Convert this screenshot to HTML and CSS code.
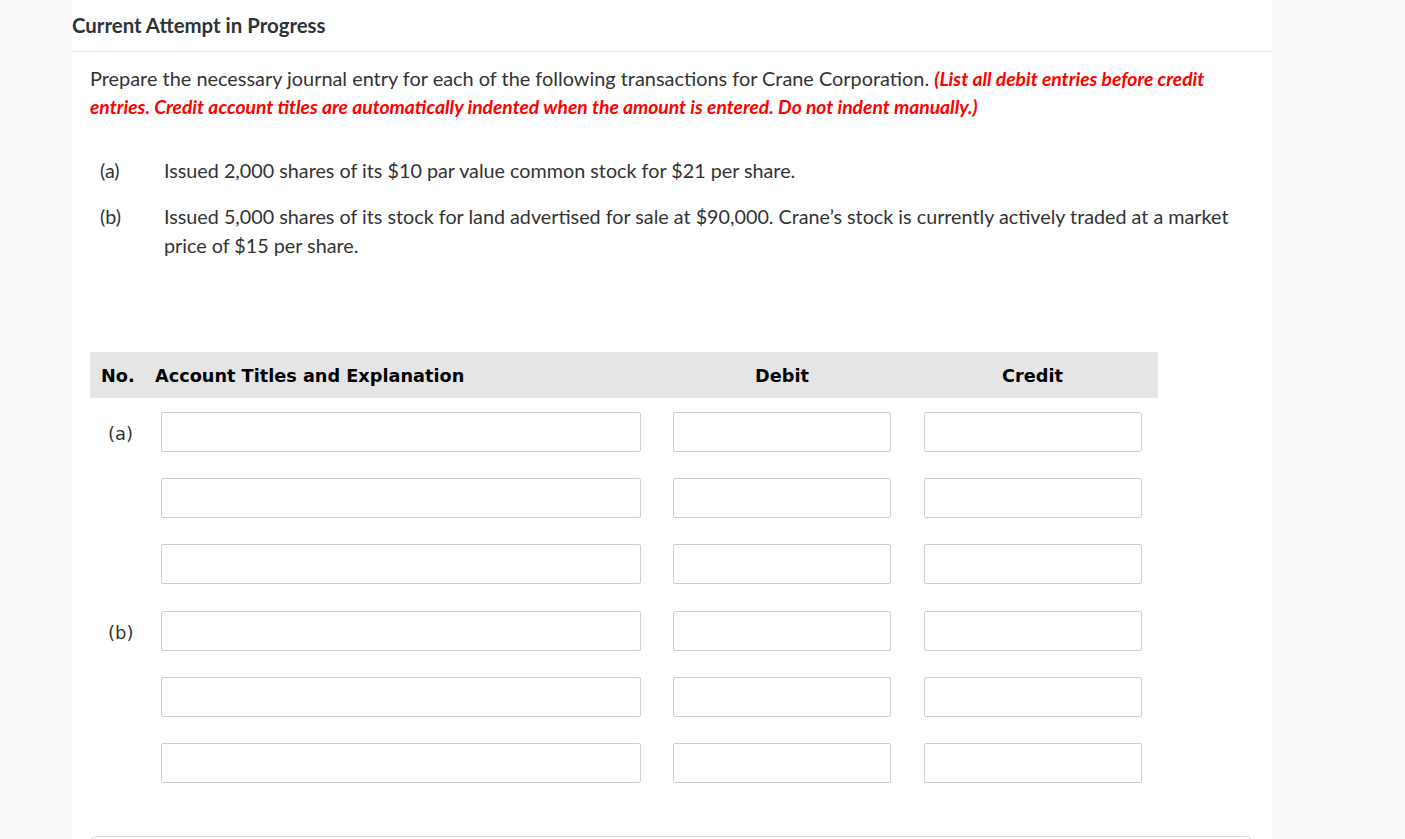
FILE: index.html
```html
<!DOCTYPE html>
<html>
<head>
<meta charset="utf-8">
<link rel="stylesheet" href="styles.css">
</head>
<body>
<div class="page">
  <div class="panel">
    <h1 class="title">Current Attempt in Progress</h1>
    <div class="content">
      <p class="prompt">Prepare the necessary journal entry for each of the following transactions for Crane Corporation. <em class="note">(List all debit entries before credit entries. Credit account titles are automatically indented when the amount is entered. Do not indent manually.)</em></p>
      <div class="items">
        <div class="item"><span class="item-label">(a)</span><span class="item-text">Issued 2,000 shares of its $10 par value common stock for $21 per share.</span></div>
        <div class="item"><span class="item-label">(b)</span><span class="item-text">Issued 5,000 shares of its stock for land advertised for sale at $90,000. Crane’s stock is currently actively traded at a market price of $15 per share.</span></div>
      </div>
      <div class="journal">
        <div class="jhead">
          <div class="jh-no">No.</div>
          <div class="jh-acct">Account Titles and Explanation</div>
          <div class="jh-amt">Debit</div>
          <div class="jh-amt">Credit</div>
        </div>
        <div class="jrow"><div class="jno">(a)</div><div class="jacct"><input class="box box-acct" type="text"></div><div class="jdebit"><input class="box box-amt" type="text"></div><div class="jcredit"><input class="box box-amt" type="text"></div></div>
        <div class="jrow"><div class="jno"></div><div class="jacct"><input class="box box-acct" type="text"></div><div class="jdebit"><input class="box box-amt" type="text"></div><div class="jcredit"><input class="box box-amt" type="text"></div></div>
        <div class="jrow"><div class="jno"></div><div class="jacct"><input class="box box-acct" type="text"></div><div class="jdebit"><input class="box box-amt" type="text"></div><div class="jcredit"><input class="box box-amt" type="text"></div></div>
        <div class="jrow"><div class="jno">(b)</div><div class="jacct"><input class="box box-acct" type="text"></div><div class="jdebit"><input class="box box-amt" type="text"></div><div class="jcredit"><input class="box box-amt" type="text"></div></div>
        <div class="jrow"><div class="jno"></div><div class="jacct"><input class="box box-acct" type="text"></div><div class="jdebit"><input class="box box-amt" type="text"></div><div class="jcredit"><input class="box box-amt" type="text"></div></div>
        <div class="jrow"><div class="jno"></div><div class="jacct"><input class="box box-acct" type="text"></div><div class="jdebit"><input class="box box-amt" type="text"></div><div class="jcredit"><input class="box box-amt" type="text"></div></div>
      </div>
      <div class="next-box"></div>
    </div>
  </div>
</div>
</body>
</html>
```

FILE: styles.css
```css
html, body {
  margin: 0;
  padding: 0;
  background: #f9f9f9;
  height: 100%;
  overflow: hidden;
}
.page {
  padding-left: 72px;
}
.panel {
  width: 1200px;
  background: #fff;
  min-height: 839px;
  font-family: Lato, "Liberation Sans", sans-serif;
  color: #333;
}
.title {
  margin: 0;
  font-size: 20.4px;
  font-weight: 700;
  line-height: 24px;
  padding: 13px 0 14px 0;
  border-bottom: 1px solid #ececec;
  color: #2d3339;
}
.content {
  padding: 12px 18px 0 18px;
}
.prompt {
  margin: 0;
  height: 56px;
  font-size: 19.9px;
  line-height: 28px;
  color: #333;
}
.note {
  color: #ff0000;
  font-weight: 700;
  font-style: italic;
  font-size: 19.25px;
  line-height: 18px;
}
.items {
  margin-top: 36px;
  font-size: 19.75px;
  line-height: 29px;
}
.item {
  display: flex;
  margin-bottom: 17px;
  padding-left: 10px;
}
.item-label {
  width: 64px;
  flex: none;
}
.item-text {
  width: 1080px;
}
.journal {
  margin-top: 92px;
  width: 1068px;
  font-family: "DejaVu Sans", sans-serif;
  color: #000;
}
.jhead {
  display: grid;
  grid-template-columns: 65px 502px 250px 251px;
  height: 46px;
  padding-top: 2px;
  box-sizing: border-box;
  align-items: center;
  background: #e5e5e5;
  font-weight: 700;
  font-size: 17.7px;
}
.jh-no {
  padding-left: 11px;
}
.jh-amt {
  text-align: center;
}
.jrow {
  display: grid;
  grid-template-columns: 71px 496px 250px 251px;
  height: 66.2px;
  padding-top: 14px;
  box-sizing: border-box;
  align-items: start;
}
.jno {
  font-size: 18px;
  line-height: 40px;
  padding-top: 2px;
  padding-left: 18px;
  color: #333;
}
.box {
  display: block;
  margin: 0;
  padding: 0 8px;
  height: 40px;
  border: 1px solid #cfcfcf;
  border-radius: 2px;
  background: #fff;
  box-sizing: border-box;
  outline: none;
}
.box-acct {
  width: 480px;
}
.jdebit .box-amt {
  width: 218px;
  margin-left: 16px;
}
.jcredit .box-amt {
  width: 218px;
  margin-left: 17px;
}
.next-box {
  margin-top: 41px;
  height: 40px;
  width: 1160px;
  border: 1px solid #dedede;
  border-bottom: none;
  border-radius: 6px 6px 0 0;
}
```
